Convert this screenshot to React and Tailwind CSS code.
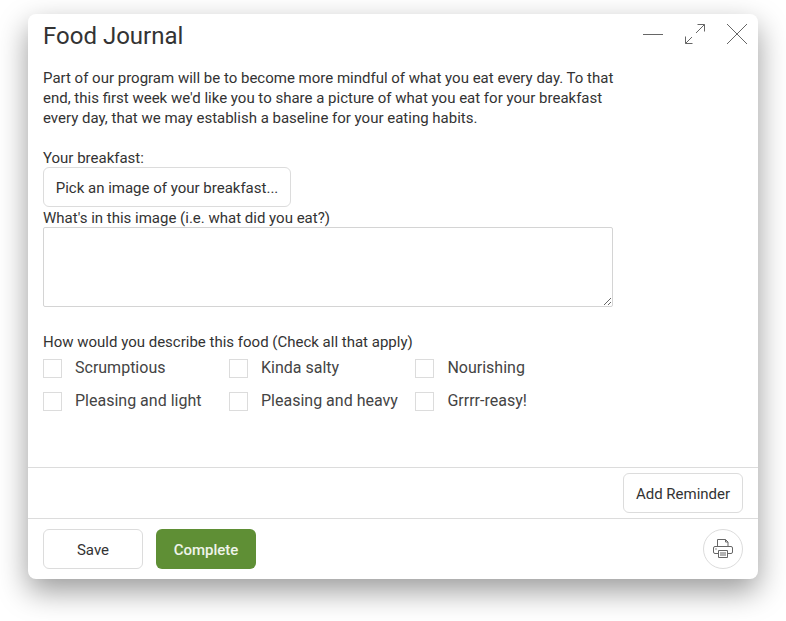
import React from 'react';

const foods = [
  { label: 'Scrumptious' },
  { label: 'Kinda salty' },
  { label: 'Nourishing' },
  { label: 'Pleasing and light' },
  { label: 'Pleasing and heavy' },
  { label: 'Grrrr-reasy!' },
];

function Check({ label }) {
  return (
    <label className="flex items-center gap-[13px] h-[33px]">
      <span className="w-[19px] h-[19px] border border-[#dcdcdc] bg-white" />
      <span className="text-[16px] text-[#444] mb-[2px]">{label}</span>
    </label>
  );
}

export default function App() {
  return (
    <div className="w-[786px] h-[621px] bg-white pt-[14px] pl-[28px] font-['Roboto',sans-serif] text-[#333]">
      <div className="w-[730px] h-[565px] flex flex-col bg-white rounded-[8px] shadow-[0_12px_30px_rgba(0,0,0,0.4)]">
        <div className="flex justify-between h-[46px] pl-[15px] pr-[11px]">
          <h1 className="text-[24px] leading-[44px] text-[#333]">Food Journal</h1>
          <div className="flex items-start gap-[22px] pt-[10px] text-[#666]">
            <svg width="20" height="20" viewBox="0 0 20 20" fill="none" stroke="currentColor" strokeWidth="1"><path d="M0 10.5h20" /></svg>
            <svg width="20" height="20" viewBox="0 0 20 20" fill="none" stroke="currentColor" strokeWidth="1"><path d="M.5 19.500 7 13M.5 12.500v7h7M19.500.5 11 9M12.500.5h7v7" /></svg>
            <svg width="20" height="20" viewBox="0 0 20 20" fill="none" stroke="currentColor" strokeWidth="1"><path d="M0 0l20 20M20 0 0 20" /></svg>
          </div>
        </div>
        <div className="flex-1 px-[15px] pt-[8px] text-[15px] leading-[20px]">
          <p className="w-[575px]">Part of our program will be to become more mindful of what you eat every day. To that end, this first week we'd like you to share a picture of what you eat for your breakfast every day, that we may establish a baseline for your eating habits.</p>
          <div className="mt-[20px] h-[19px]">Your breakfast:</div>
          <button className="block h-[40px] w-[248px] pt-[2px] bg-white border border-[#dcdcdc] rounded-[6px] text-[#333]">Pick an image of your breakfast...</button>
          <div className="h-[20px] leading-[22px]">What's in this image (i.e. what did you eat?)</div>
          <textarea className="block w-[570px] h-[80px] border border-[#d4d4d4] rounded-[2px]" />
          <div className="mt-[24px] mb-[1px] h-[20px] leading-[22px]">How would you describe this food (Check all that apply)</div>
          <div className="grid grid-cols-[186px_186.45px_1fr] w-[570px]">
            {foods.map((food) => (
              <Check key={food.label} label={food.label} />
            ))}
          </div>
        </div>
        <div className="flex justify-end h-[51px] items-center px-[15px] border-t border-[#dcdcdc]">
          <button className="h-[40px] w-[120px] pt-[2px] bg-white border border-[#dcdcdc] rounded-[6px] text-[15px] text-[#333]">Add Reminder</button>
        </div>
        <div className="flex items-center h-[61px] px-[15px] border-t border-[#dcdcdc] text-[15px]">
          <button className="h-[40px] w-[100px] pt-[2px] bg-white border border-[#dcdcdc] rounded-[6px] text-[#333]">Save</button>
          <button className="h-[40px] w-[100px] pt-[2px] ml-[13px] bg-[#5f8f35] rounded-[6px] text-white/90 font-medium">Complete</button>
          <button className="ml-auto w-[40px] h-[40px] flex items-center justify-center border border-[#dcdcdc] rounded-full text-[#666]">
            <svg width="20" height="20" viewBox="0 0 20 20" fill="none" stroke="currentColor" strokeWidth="1">
              <path d="M4.500 7.500V.5h8l2.500 2.500v4.500" />
              <path d="M12.500.5v2.500H15" />
              <path d="M5 14.500H2a1.500 1.500 0 0 1-1.500-1.500V9A1.500 1.500 0 0 1 2 7.500h16A1.500 1.500 0 0 1 19.500 9v4a1.500 1.500 0 0 1-1.500 1.500h-3" />
              <path d="M5.500 11.500h9v7h-9z" />
              <path d="M7 14h6M7 16h6" />
              <circle cx="3" cy="10" r=".7" fill="currentColor" stroke="none" />
            </svg>
          </button>
        </div>
      </div>
    </div>
  );
}
